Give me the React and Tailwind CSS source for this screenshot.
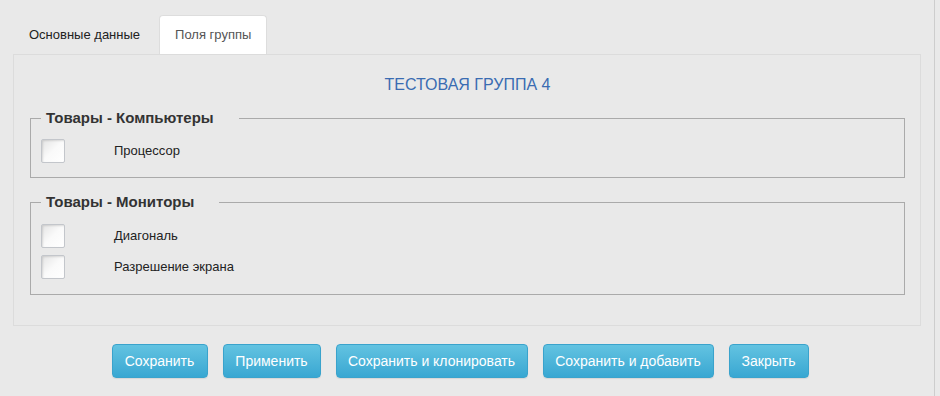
import React, { useState } from 'react';

const groups = [
  { title: 'Товары - Компьютеры', fields: ['Процессор'], box: 'mt-[14px] pb-[14px]', list: 'mt-[12px]' },
  { title: 'Товары - Мониторы', fields: ['Диагональ', 'Разрешение экрана'], box: 'mt-[15px] pb-[15px]', list: 'mt-[13px]' },
];

const buttons = [
  { label: 'Сохранить', w: 'w-[96px]' },
  { label: 'Применить', w: 'w-[98px]' },
  { label: 'Сохранить и клонировать', w: 'w-[192px]' },
  { label: 'Сохранить и добавить', w: 'w-[171px]' },
  { label: 'Закрыть', w: 'w-[80px]' },
];

const Checkbox = ({ checked, onChange }) => (
  <button
    onClick={onChange}
    className="w-[24px] h-[24px] shrink-0 border border-[#c3c6cb] rounded-[2px] bg-gradient-to-br from-[#e4e4e4] via-[#fafafa] to-white shadow-[inset_1px_1px_2px_rgba(0,0,0,0.12)] flex items-center justify-center text-[#333] text-[14px]"
  >
    {checked ? '✓' : ''}
  </button>
);

export default function App() {
  const [tab, setTab] = useState(1);
  const [checked, setChecked] = useState({});

  const toggle = (key) => setChecked((prev) => ({ ...prev, [key]: !prev[key] }));

  return (
    <div className="w-[940px] h-[396px] bg-[#e9e9e9] flex font-['Liberation_Sans',Arial,sans-serif] overflow-hidden">
      <div className="w-[935px] border-r border-[#cdcdcd] pt-[15px] px-[13px]">
        {/* Tabs */}
        <div className="flex h-[39px] items-end">
          {['Основные данные', 'Поля группы'].map((t, i) => (
            <button
              key={t}
              onClick={() => setTab(i)}
              className={`h-[39px] px-[15px] mr-[3px] text-[13px] rounded-t-[4px] border border-b-0 ${
                tab === i
                  ? 'bg-white border-[#dddddd] text-[#555]'
                  : 'border-transparent text-[#222]'
              }`}
            >
              {t}
            </button>
          ))}
        </div>

        {/* Panel */}
        <div className="border border-[#dcdcdc] pt-[20px] pb-[30px] pl-[16px] pr-[15px]">
          <div className="h-[20px] text-center text-[16px] leading-[20px] text-[#3a6cb2]">
            ТЕСТОВАЯ ГРУППА 4
          </div>

          {groups.map((g) => (
            <fieldset key={g.title} className={`border border-[#aaaaaa] px-[10px] ${g.box}`}>
              <legend className="pl-[5px] pr-[25px] text-[15px] leading-[18px] font-bold text-[#333]">
                {g.title}
              </legend>
              <div className={`flex flex-col gap-[7px] ${g.list}`}>
                {g.fields.map((f) => {
                  const key = g.title + f;
                  return (
                    <div key={f} className="flex items-center h-[24px]">
                      <Checkbox checked={!!checked[key]} onChange={() => toggle(key)} />
                      <span className="ml-[49px] text-[13px] text-[#222]">{f}</span>
                    </div>
                  );
                })}
              </div>
            </fieldset>
          ))}
        </div>

        {/* Buttons */}
        <div className="flex justify-center gap-[15px] mt-[18px] pr-[14px]">
          {buttons.map((b) => (
            <button
              key={b.label}
              className={`${b.w} h-[34px] rounded-[4px] border border-[#3aa3cc] bg-gradient-to-b from-[#62c3e1] to-[#38a7d2] text-white text-[14px] shadow-[0_1px_1px_rgba(0,0,0,0.08)]`}
            >
              {b.label}
            </button>
          ))}
        </div>
      </div>
    </div>
  );
}
